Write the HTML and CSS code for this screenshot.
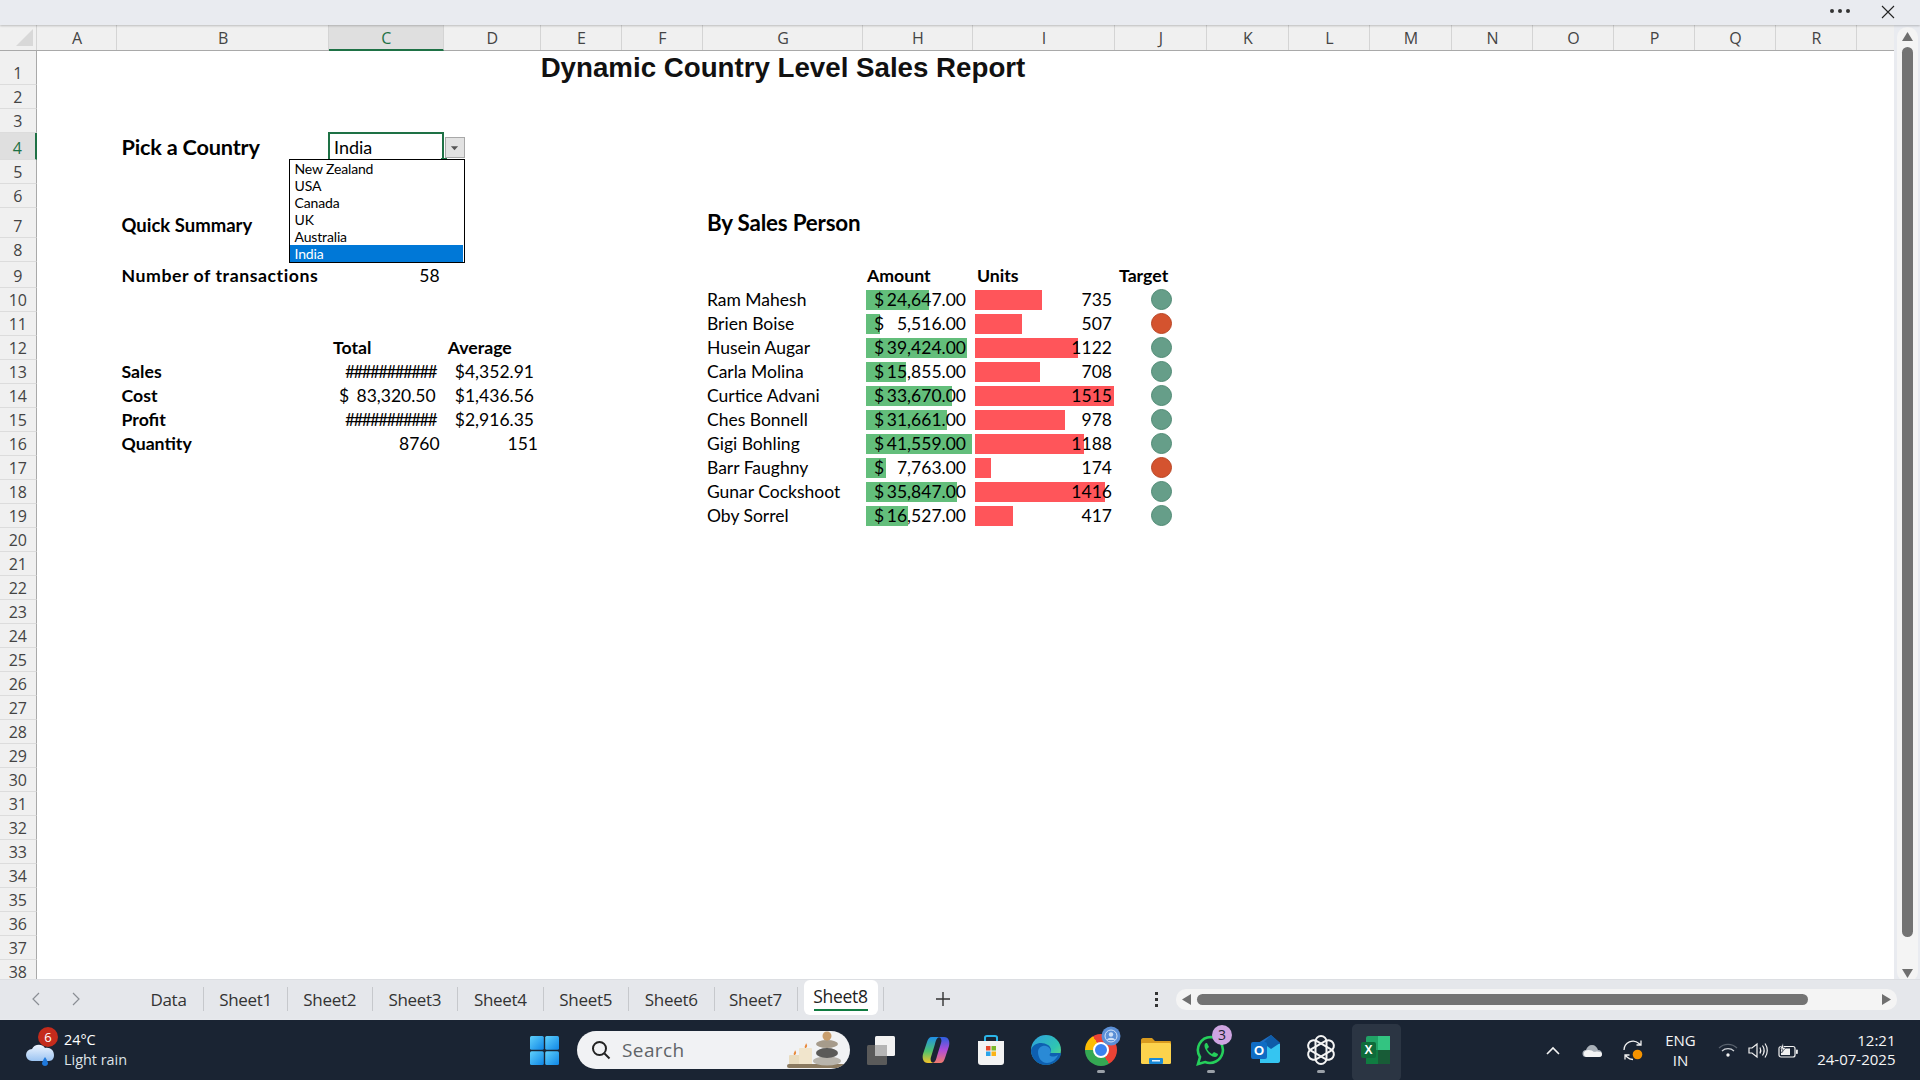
FILE: index.html
```html
<!DOCTYPE html>
<html lang="en">
<head>
<meta charset="utf-8">
<title>Dynamic Country Level Sales Report</title>
<link rel="stylesheet" href="styles.css">
</head>
<body>
<header class="titlebar">
  <div class="dots"><i></i><i></i><i></i></div>
  <svg class="close" viewBox="0 0 14 14"><path d="M1 1L13 13M13 1L1 13"/></svg>
</header>
<main class="main">
  <section class="sheet">
    <div class="row colhead">
      <div class="corner"><svg viewBox="0 0 36 25"><path d="M33 4V21H16Z"/></svg></div>
      <div class="ch-l">A</div><div class="ch-l">B</div><div class="ch-l active">C</div><div class="ch-l">D</div><div class="ch-l">E</div><div class="ch-l">F</div><div class="ch-l">G</div><div class="ch-l">H</div><div class="ch-l">I</div><div class="ch-l">J</div><div class="ch-l">K</div><div class="ch-l">L</div><div class="ch-l">M</div><div class="ch-l">N</div><div class="ch-l">O</div><div class="ch-l">P</div><div class="ch-l">Q</div><div class="ch-l">R</div><div class="ch-l end"></div>
    </div>
    <div class="row r1"><div class="rh">1</div><div class="c cg title-cell"><span class="title">Dynamic Country Level Sales Report</span></div></div>
    <div class="row"><div class="rh">2</div></div>
    <div class="row"><div class="rh">3</div></div>
    <div class="row r4"><div class="rh active">4</div><div class="c cb big">Pick a Country</div><div class="c cc sel">India</div></div>
    <div class="row"><div class="rh">5</div></div>
    <div class="row"><div class="rh">6</div></div>
    <div class="row r7"><div class="rh">7</div><div class="c cb b mid">Quick Summary</div><div class="c cg b sales-title">By Sales Person</div></div>
    <div class="row"><div class="rh">8</div></div>
    <div class="row r9"><div class="rh">9</div><div class="c cb b wide">Number of transactions</div><div class="c cc num">58</div><div class="c ch b">Amount</div><div class="c ci b">Units</div><div class="c cj b">Target</div></div>
    <div class="row"><div class="rh">10</div><div class="c cg">Ram Mahesh</div><div class="c ch acc"><i class="bar green" style="width:63px"></i><span>$</span><span>24,647.00</span></div><div class="c ci num"><i class="bar red" style="width:66.5px"></i><span>735</span></div><div class="c cj"><i class="dot ok"></i></div></div>
    <div class="row"><div class="rh">11</div><div class="c cg">Brien Boise</div><div class="c ch acc"><i class="bar green" style="width:14px"></i><span>$</span><span>5,516.00</span></div><div class="c ci num"><i class="bar red" style="width:46.5px"></i><span>507</span></div><div class="c cj"><i class="dot bad"></i></div></div>
    <div class="row"><div class="rh">12</div><div class="c cb"></div><div class="c cc b">Total</div><div class="c cd b">Average</div><div class="c cg">Husein Augar</div><div class="c ch acc"><i class="bar green" style="width:101px"></i><span>$</span><span>39,424.00</span></div><div class="c ci num"><i class="bar red" style="width:103px"></i><span>1122</span></div><div class="c cj"><i class="dot ok"></i></div></div>
    <div class="row"><div class="rh">13</div><div class="c cb b">Sales</div><div class="c cc hash">###########</div><div class="c cd avg">$4,352.91</div><div class="c cg">Carla Molina</div><div class="c ch acc"><i class="bar green" style="width:40px"></i><span>$</span><span>15,855.00</span></div><div class="c ci num"><i class="bar red" style="width:64.5px"></i><span>708</span></div><div class="c cj"><i class="dot ok"></i></div></div>
    <div class="row"><div class="rh">14</div><div class="c cb b">Cost</div><div class="c cc acc2"><span>$</span><span>83,320.50</span></div><div class="c cd avg">$1,436.56</div><div class="c cg">Curtice Advani</div><div class="c ch acc"><i class="bar green" style="width:86px"></i><span>$</span><span>33,670.00</span></div><div class="c ci num"><i class="bar red" style="width:139px"></i><span>1515</span></div><div class="c cj"><i class="dot ok"></i></div></div>
    <div class="row"><div class="rh">15</div><div class="c cb b">Profit</div><div class="c cc hash">###########</div><div class="c cd avg">$2,916.35</div><div class="c cg">Ches Bonnell</div><div class="c ch acc"><i class="bar green" style="width:81px"></i><span>$</span><span>31,661.00</span></div><div class="c ci num"><i class="bar red" style="width:90px"></i><span>978</span></div><div class="c cj"><i class="dot ok"></i></div></div>
    <div class="row"><div class="rh">16</div><div class="c cb b">Quantity</div><div class="c cc num">8760</div><div class="c cd num">151</div><div class="c cg">Gigi Bohling</div><div class="c ch acc"><i class="bar green" style="width:106px"></i><span>$</span><span>41,559.00</span></div><div class="c ci num"><i class="bar red" style="width:109px"></i><span>1188</span></div><div class="c cj"><i class="dot ok"></i></div></div>
    <div class="row"><div class="rh">17</div><div class="c cg">Barr Faughny</div><div class="c ch acc"><i class="bar green" style="width:20px"></i><span>$</span><span>7,763.00</span></div><div class="c ci num"><i class="bar red" style="width:15.5px"></i><span>174</span></div><div class="c cj"><i class="dot bad"></i></div></div>
    <div class="row"><div class="rh">18</div><div class="c cg">Gunar Cockshoot</div><div class="c ch acc"><i class="bar green" style="width:91px"></i><span>$</span><span>35,847.00</span></div><div class="c ci num"><i class="bar red" style="width:130px"></i><span>1416</span></div><div class="c cj"><i class="dot ok"></i></div></div>
    <div class="row"><div class="rh">19</div><div class="c cg">Oby Sorrel</div><div class="c ch acc"><i class="bar green" style="width:42px"></i><span>$</span><span>16,527.00</span></div><div class="c ci num"><i class="bar red" style="width:38px"></i><span>417</span></div><div class="c cj"><i class="dot ok"></i></div></div>
    <div class="row"><div class="rh">20</div></div><div class="row"><div class="rh">21</div></div><div class="row"><div class="rh">22</div></div><div class="row"><div class="rh">23</div></div><div class="row"><div class="rh">24</div></div><div class="row"><div class="rh">25</div></div><div class="row"><div class="rh">26</div></div><div class="row"><div class="rh">27</div></div><div class="row"><div class="rh">28</div></div><div class="row"><div class="rh">29</div></div><div class="row"><div class="rh">30</div></div><div class="row"><div class="rh">31</div></div><div class="row"><div class="rh">32</div></div><div class="row"><div class="rh">33</div></div><div class="row"><div class="rh">34</div></div><div class="row"><div class="rh">35</div></div><div class="row"><div class="rh">36</div></div><div class="row"><div class="rh">37</div></div><div class="row r38"><div class="rh">38</div></div>

    <div class="dd-handle"></div>
    <div class="dd-btn"><svg viewBox="0 0 10 6"><path d="M1 1H9L5 5.5Z"/></svg></div>
    <ul class="dd-list">
      <li>New Zealand</li><li>USA</li><li>Canada</li><li>UK</li><li>Australia</li><li class="on">India</li>
    </ul>
  </section>
  <aside class="vscroll">
    <div class="vtrack">
      <svg class="varrow" viewBox="0 0 11 9"><path d="M5.500 0L11 9H0Z"/></svg>
      <div class="vthumb"></div>
      <svg class="varrow" viewBox="0 0 11 9"><path d="M0 0H11L5.500 9Z"/></svg>
    </div>
  </aside>
</main>
<nav class="tabbar">
  <svg class="nav-arrow a1" viewBox="0 0 8 14"><path d="M7 1L1 7L7 13"/></svg>
  <svg class="nav-arrow a2" viewBox="0 0 8 14"><path d="M1 1L7 7L1 13"/></svg>
  <div class="tabs">
    <div class="tab t0">Data</div>
    <div class="tab t1">Sheet1</div>
    <div class="tab t2">Sheet2</div>
    <div class="tab t2">Sheet3</div>
    <div class="tab t3">Sheet4</div>
    <div class="tab t2">Sheet5</div>
    <div class="tab t3">Sheet6</div>
    <div class="tab t4">Sheet7</div>
    <div class="tab active">Sheet8</div>
    <div class="tab-end"></div>
  </div>
  <svg class="plus" viewBox="0 0 16 16"><path d="M8 1V15M1 8H15"/></svg>
  <div class="kebab"><i></i><i></i><i></i></div>
  <div class="htrack">
    <svg class="harrow" viewBox="0 0 9 11"><path d="M9 0V11L0 5.500Z"/></svg>
    <div class="hthumb"></div>
    <svg class="harrow" viewBox="0 0 9 11"><path d="M0 0V11L9 5.500Z"/></svg>
  </div>
</nav>
<footer class="taskbar">
  <div class="weather">
    <div class="wicon">
      <svg viewBox="0 0 32 26" width="32" height="26"><defs><linearGradient id="cl" x1="0" y1="0" x2="0" y2="1"><stop offset="0" stop-color="#eef5ff"/><stop offset="1" stop-color="#9cc4f2"/></linearGradient></defs><path d="M7 19a6 6 0 0 1 0-12c2-5 10-6 13-1 5-1 9 2 9 7s-3 6-6 6Z" fill="url(#cl)"/><path d="M20 15c2 3 3 5 3 7a3.200 3.200 0 0 1-6 0c0-2 1-4 3-7Z" fill="#1e78dc"/></svg>
      <span class="wbadge">6</span>
    </div>
    <div class="wtext"><span>24°C</span><span class="wsub">Light rain</span></div>
  </div>
  <div class="center">
    <svg class="winlogo" viewBox="0 0 29 29"><defs><linearGradient id="wl" x1="0" y1="0" x2="1" y2="1"><stop offset="0" stop-color="#5fd0fb"/><stop offset="1" stop-color="#0f86e6"/></linearGradient></defs><rect x="0" y="0" width="13.800" height="13.800" rx="1.500" fill="url(#wl)"/><rect x="15.200" y="0" width="13.800" height="13.800" rx="1.500" fill="url(#wl)"/><rect x="0" y="15.200" width="13.800" height="13.800" rx="1.500" fill="url(#wl)"/><rect x="15.200" y="15.200" width="13.800" height="13.800" rx="1.500" fill="url(#wl)"/></svg>
    <div class="search">
      <svg class="sicon" viewBox="0 0 20 20"><circle cx="8.500" cy="8.500" r="6.500"/><path d="M13.500 13.500L18.500 18.500"/></svg>
      <span class="stext">Search</span>
      <svg class="stones" viewBox="0 0 60 38"><rect x="2" y="24" width="12" height="10" rx="1" fill="#e9dcc0"/><rect x="12" y="17" width="13" height="17" rx="1" fill="#f1e5cc"/><path d="M7 24c-1-2 1-3 1-5 1 2 2 3 0 5ZM18 17c-1-2 1-3 1-5 1 2 2 3 0 5Z" fill="#e98a3c"/><rect x="0" y="33" width="58" height="4" rx="2" fill="#8b7a60"/><ellipse cx="40" cy="30" rx="14" ry="4.500" fill="#b8b4ac"/><ellipse cx="40" cy="22" rx="11" ry="5" fill="#5b5a58"/><ellipse cx="40" cy="13" rx="11" ry="4" fill="#a69b8b"/><circle cx="40" cy="5" r="4.500" fill="#c89d6c"/></svg>
    </div>
    <div class="apps">
      <div class="app"><svg viewBox="0 0 32 32"><rect x="10" y="2" width="20" height="20" rx="1.500" fill="#f2f2f2"/><rect x="2" y="11" width="20" height="20" rx="1.500" fill="#5a5a5a"/><rect x="10" y="11" width="12" height="11" fill="#b5b5b5"/></svg></div>
      <div class="app"><svg viewBox="0 0 32 32"><defs><linearGradient id="cp1" x1="0" y1="0" x2="0" y2="1"><stop offset="0" stop-color="#1f8fe8"/><stop offset=".55" stop-color="#4fc36d"/><stop offset="1" stop-color="#f6c329"/></linearGradient><linearGradient id="cp2" x1="0" y1="0" x2="0" y2="1"><stop offset="0" stop-color="#2b5fe0"/><stop offset=".5" stop-color="#b04cd8"/><stop offset="1" stop-color="#f07a6c"/></linearGradient></defs><path d="M20 29C23 29 24 27 25 24L29 12C30 8 29 3 24 3H18C21 3 22 6 21 9L17 22C16 26 15 29 12 29Z" fill="url(#cp2)"/><path d="M12 3C9 3 8 5 7 8L3 20C2 24 3 29 8 29H14C11 29 10 26 11 23L15 10C16 6 17 3 20 3Z" fill="url(#cp1)"/></svg></div>
      <div class="app"><svg viewBox="0 0 32 32"><path d="M10 7V3.500C10 2.500 11 2 12 2h8c1 0 2 .5 2 1.500V7" fill="none" stroke="#2bb5e8" stroke-width="2"/><path d="M3 7h26v21c0 2-1 3-3 3H6c-2 0-3-1-3-3Z" fill="#f3f3f3"/><rect x="11" y="12" width="4.500" height="4.500" fill="#e6492d"/><rect x="16.500" y="12" width="4.500" height="4.500" fill="#7bb82a"/><rect x="11" y="17.500" width="4.500" height="4.500" fill="#2aa4ea"/><rect x="16.500" y="17.500" width="4.500" height="4.500" fill="#fbb416"/></svg></div>
      <div class="app"><svg viewBox="0 0 32 32"><defs><linearGradient id="ed" x1="0" y1="0" x2="1" y2="1"><stop offset="0" stop-color="#2e9ee0"/><stop offset=".6" stop-color="#2fc4b2"/><stop offset="1" stop-color="#7fe06a"/></linearGradient></defs><circle cx="16" cy="16" r="15" fill="url(#ed)"/><path d="M1 16C3 9 12 7 18 11c3 2 4 6 2 8h11c0 6-7 12-15 12C7 31 1 24 1 16Z" fill="#0e5fb0"/><path d="M8 18c0-4 4-7 8-6 4 1 6 5 4 8-2 2 3 4 8 1-2 5-7 8-11 8-6 0-9-6-9-11Z" fill="#2a8ad6"/></svg></div>
      <div class="app"><div class="chrome"><i></i></div><span class="chrome-badge"><svg viewBox="0 0 20 20" width="20" height="20"><circle cx="10" cy="10" r="9.500" fill="#5b8fd6"/><circle cx="10" cy="10" r="6" fill="none" stroke="#cfe0f7" stroke-width="1"/><circle cx="10" cy="8.500" r="2.200" fill="#cfe0f7"/><path d="M6 14c1-3 7-3 8 0Z" fill="#cfe0f7"/></svg></span></div>
      <div class="app"><svg viewBox="0 0 32 32"><path d="M1 6c0-1 1-2 2-2h9l3 3h15c1 0 1 1 1 1v4H1Z" fill="#d99b1f"/><rect x="1" y="9" width="30" height="21" rx="1.500" fill="#fcd34d"/><rect x="9" y="24" width="14" height="6" rx="1" fill="#1a8ad8"/><rect x="12" y="26" width="8" height="1.500" fill="#e8f4ff"/></svg></div>
      <div class="app"><svg viewBox="0 0 32 32"><path d="M16 3a13 13 0 0 0-11 20L3 30l7-2a13 13 0 1 0 6-25Z" fill="none" stroke="#25cf5b" stroke-width="2.600"/><path d="M11 9c-2 1-2 4 0 7 2 4 6 7 9 7 2 0 3-2 3-3l-4-2-2 2c-2-1-4-3-5-5l2-2-2-4Z" fill="#25cf5b"/></svg><span class="appbadge">3</span></div>
      <div class="app"><svg viewBox="0 0 32 32"><path d="M8 9l13-8 9 8v15H8Z" fill="#1f6fc4"/><path d="M10 10h20v17c0 1-1 2-2 2H10Z" fill="#35c5f1"/><path d="M21 1l9 8-9 6-8-6Z" fill="#0f5ca8"/><rect x="1" y="8" width="16" height="17" rx="2" fill="#0f6cc4"/></svg><span class="outlook-o">O</span></div>
      <div class="app"><svg viewBox="0 0 32 32" fill="none" stroke="#f4f4f4" stroke-width="2"><rect x="10.500" y="2" width="11" height="28" rx="5.500"/><rect x="10.500" y="2" width="11" height="28" rx="5.500" transform="rotate(60 16 16)"/><rect x="10.500" y="2" width="11" height="28" rx="5.500" transform="rotate(120 16 16)"/></svg></div>
      <div class="app excel"><svg viewBox="0 0 32 32"><rect x="6" y="2" width="24" height="28" rx="2" fill="#21a366"/><rect x="18" y="2" width="12" height="14" fill="#33c481"/><rect x="6" y="16" width="24" height="14" fill="#107c41"/><rect x="18" y="16" width="12" height="14" fill="#185c37"/><rect x="1" y="8" width="15" height="16" rx="2" fill="#0f6b3a"/></svg><span class="excel-x">X</span></div>
    </div>
  </div>
  <div class="tray">
    <svg class="t-chev" viewBox="0 0 14 9"><path d="M1 8L7 2L13 8"/></svg>
    <svg class="t-cloud" viewBox="0 0 20 13"><path d="M4 13a3.500 3.500 0 0 1 0-7c1-3 3-5 6-5s5 2 6 5c3 0 4 2 4 4s-1 3-3 3Z" fill="#a9b0b8"/><path d="M4 13a3.500 3.500 0 0 1-1-6c3-2 7-1 9 1 2-1 8-1 8 2 0 2-1 3-3 3Z" fill="#f4f4f4"/></svg>
    <span class="t-sync"><svg viewBox="0 0 22 22" width="22" height="22"><path d="M2 11a9 9 0 0 1 15-6.500L19 6M19 1.500V6H14.500M3 16l2 2a9 9 0 0 0 6 2.500M3 20.500V16H7.500" fill="none" stroke="#f2f2f2" stroke-width="1.300"/><circle cx="15.500" cy="15.500" r="4.800" fill="#f59300"/></svg></span>
    <div class="t-lang"><span>ENG</span><span>IN</span></div>
    <svg class="t-wifi" viewBox="0 0 20 14"><path d="M1 5a13 13 0 0 1 18 0" fill="none" stroke="#59626e" stroke-width="1.300"/><path d="M4 8a9 9 0 0 1 12 0" fill="none" stroke="#cfd3d8" stroke-width="1.300"/><circle cx="10" cy="12" r="1.700" fill="#f4f4f4"/></svg>
    <svg class="t-vol" viewBox="0 0 20 17" fill="none" stroke="#f2f2f2" stroke-width="1.200"><path d="M1 6v5h3l5 4V2L4 6Z"/><path d="M12 5.500c1 2 1 4 0 6M14.500 3.500c2 3 2 7 0 10M17 1.500c3 4 3 10 0 14"/></svg>
    <svg class="t-bat" viewBox="0 0 20 15"><rect x="1" y="3.500" width="16" height="10.500" rx="2" fill="none" stroke="#f2f2f2" stroke-width="1.200"/><rect x="3" y="5.500" width="9" height="6.500" fill="#f2f2f2"/><rect x="18" y="6.500" width="1.800" height="4.500" rx=".8" fill="#f2f2f2"/><path d="M5 0L2 6H5L3.500 10L8 4.500H5.500Z" fill="#f2f2f2" stroke="#1a2433" stroke-width=".6"/></svg>
    <div class="t-clock"><span>12:21</span><span>24-07-2025</span></div>
  </div>
</footer>
</body>
</html>
```
FILE: styles.css
```css
* { box-sizing: border-box; }
html, body { margin: 0; padding: 0; }
body {
  width: 1920px;
  height: 1080px;
  overflow: hidden;
  display: flex;
  flex-direction: column;
  background: #e7e9ed;
  font-family: "Lato", "Liberation Sans", sans-serif;
  color: #000;
}

/* top strip */
.titlebar {
  height: 25px;
  flex: none;
  background: #e9ebf0;
  box-shadow: 0 1px 2px rgba(0,0,0,.22);
  display: flex;
  justify-content: flex-end;
  align-items: center;
  gap: 31px;
  padding-right: 25px;
  position: relative;
  z-index: 2;
}
.dots { display: flex; gap: 4px; margin-top: -3px; }
.dots i { width: 4px; height: 4px; border-radius: 50%; background: #333; }
.close { width: 14px; height: 14px; margin-top: -1px; }
.close path { stroke: #222; stroke-width: 1.1; fill: none; }

/* sheet */
.main { height: 954px; flex: none; display: flex; }
.sheet {
  width: 1894px;
  height: 954px;
  background: #fff;
  position: relative;
  --cols: 36.7px 80.8px 211.5px 114.7px 97.3px 81px 81px 160px 110px 142px 92px 82px 81px 82px 81px 81px 81px 81px 81px 37px;
}
.row {
  display: grid;
  grid-template-columns: var(--cols);
  grid-template-rows: 100%;
  height: 24px;
  font-size: 17.500px;
  line-height: 23px;
}
.colhead {
  height: 25.7px;
  background: #f0f0f0;
  border-bottom: 1px solid #a9a9a9;
  font-family: "Open Sans", sans-serif;
  font-size: 16px;
  color: #444;
}
.corner { border-right: 1px solid #d4d4d4; }
.corner svg { display: block; width: 36px; height: 25px; }
.corner path { fill: #d8d8d8; }
.ch-l { text-align: center; border-right: 1px solid #d4d4d4; line-height: 26px; padding-left: 1px; }
.ch-l.end { border-right: 0; }
.ch-l.active {
  background: #dfdfdf;
  color: #1e7145;
  border-bottom: 2px solid #1e7145;
  height: 25.700px;
}
.r1 { height: 34.8px; }
.r4 { height: 26.8px; }
.r7 { height: 30px; }
.r9 { height: 26px; }
.r38 { height: 18.500px; }

.rh {
  grid-column: 1;
  background: #f0f0f0;
  border-right: 1px solid #a9a9a9;
  border-bottom: 1px solid #dcdcdc;
  font-family: "Open Sans", sans-serif;
  font-size: 16px;
  line-height: 21px;
  color: #444;
  text-align: center;
  display: flex;
  align-items: flex-end;
  justify-content: center;
}
.r38 .rh { line-height: 13px; align-items: flex-start; padding-top: 6px; border-bottom: 0; }
.rh.active {
  background: #dfdfdf;
  color: #1e7145;
  border-right: 2px solid #1e7145;
}

.c {
  padding: 0 4px;
  white-space: nowrap;
  align-self: end;
  height: 24px;
  position: relative;
}
.cb { grid-column: 3; }
.cc { grid-column: 4; }
.cd { grid-column: 5; }
.cg { grid-column: 8; }
.ch { grid-column: 9; }
.ci { grid-column: 10; }
.cj { grid-column: 11; }
.b { font-weight: 700; font-size: 17.700px; }
.wide { letter-spacing: .55px; }
.big { font-size: 21.700px; font-weight: 700; letter-spacing: -.2px; line-height: 22px; }
.mid { font-size: 18.500px; }
.sales-title { font-size: 22.400px; margin-bottom: 3px; letter-spacing: -.2px; }
.num { text-align: right; }
.ci.num, .cd.num { padding-right: 3px; }
.title-cell { align-self: center; display: flex; justify-content: center; }
.title {
  font-family: "Liberation Sans", Arial, sans-serif;
  font-weight: 700;
  font-size: 27.700px;
  line-height: 24px;
  color: #111;
}
.sel {
  height: 28px;
  margin-left: -1px;
  border: 2px solid #1e7145;
  border-bottom-width: 0;
  font-size: 18px;
  line-height: 26px;
  padding-left: 4px;
}
.acc, .acc2 { display: flex; justify-content: space-between; }
.acc { padding: 0 7px 0 11px; }
.acc2 { padding: 0 8px 0 10px; }
.hash { text-align: right; padding-right: 8px; letter-spacing: -1.900px; }
.avg { text-align: right; padding-right: 7px; }
.acc span, .num span { position: relative; }
.bar {
  position: absolute;
  left: 2.500px;
  top: 2px;
  height: 20px;
}
.green { background: #63be7b; left: 3px; }
.red { background: #ff555a; }
.dot {
  display: block;
  width: 21px;
  height: 21px;
  border-radius: 50%;
  margin: 1px 0 0 32.500px;
}
.dot.ok { background: #669e89; border: 1px solid #4f8a74; }
.dot.bad { background: #d4532f; border: 1px solid #b94524; }

/* dropdown */
.dd-handle {
  position: absolute;
  left: 441px;
  top: 133px;
  width: 6px;
  height: 5px;
  background: #1e7145;
}
.dd-btn {
  position: absolute;
  left: 444.500px;
  top: 112px;
  width: 20px;
  height: 21px;
  background: #e2e2e2;
  border: 1px solid #a8a8a8;
  display: flex;
  align-items: center;
  justify-content: center;
}
.dd-btn svg { width: 9px; height: 6px; }
.dd-btn path { fill: #555; }
.dd-list {
  position: absolute;
  left: 289px;
  top: 134.300px;
  width: 175.500px;
  height: 103.400px;
  margin: 0;
  padding: 0 1px 0 0;
  list-style: none;
  background: #fff;
  border: 1px solid #000;
  font-size: 14px;
  line-height: 17px;
}
.dd-list li { padding-left: 4.500px; height: 17px; letter-spacing: -.15px; }
.dd-list li.on { background: #0078d7; color: #fff; }

/* vertical scroll */
.vscroll { width: 26px; background: #e9ebf0; padding-top: 2px; position: relative; }
.vtrack {
  width: 21px;
  height: 955px;
  margin-left: 3px;
  background: #f4f4f4;
  border-radius: 10px;
  display: flex;
  flex-direction: column;
  align-items: center;
  gap: 6px;
  padding: 5px 0 6px;
}
.varrow { width: 11px; height: 9px; flex: none; }
.varrow path { fill: #6f6f6f; }
.vthumb { flex: none; width: 11px; height: 890px; background: #737373; border-radius: 6px; margin-bottom: 26px; }

/* sheet tabs */
.tabbar {
  height: 40px;
  flex: none;
  display: flex;
  align-items: center;
  background: #e5e7eb;
  position: relative;
  padding-left: 32px;
  padding-bottom: 1px;
  border-top: 1px solid #dcdee2;
}
.nav-arrow { width: 8px; height: 14px; flex: none; fill: none; stroke: #8a8e94; stroke-width: 1.200; }
.a2 { margin-left: 32px; }
.tabs {
  display: flex;
  height: 100%;
  margin-left: 54.400px;
  font-family: "Open Sans", sans-serif;
  font-size: 17px;
  color: #333;
  letter-spacing: -.3px;
}
.tab {
  display: flex;
  align-items: center;
  justify-content: center;
  height: 24px;
  margin-top: 7px;
  border-right: 1px solid #c6c8cc;
}
.t0 { width: 69.200px; }
.t1 { width: 84px; padding-left: 1px; }
.t2 { width: 85.200px; }
.t3 { width: 85.700px; }
.t4 { width: 83px; }
.tab.active {
  width: 74px;
  height: 35px;
  margin-top: 0;
  margin-left: 6px;
  background: #fff;
  border: 0;
  border-radius: 6px;
  font-weight: 500;
  font-size: 17.500px;
  color: #222;
  padding-bottom: 4px;
  position: relative;
}
.tab.active::after {
  content: "";
  position: absolute;
  left: 10px;
  right: 10px;
  bottom: 4px;
  height: 2px;
  background: #107c41;
}
.tab-end { width: 1px; height: 24px; margin: 7px 0 0 5.500px; background: #c6c8cc; }
.plus { width: 16px; height: 16px; margin-left: 50.500px; flex: none; fill: none; stroke: #333; stroke-width: 1.400; }
.kebab { display: flex; flex-direction: column; gap: 3px; margin-left: 204px; }
.kebab i { display: block; width: 3px; height: 3px; background: #333; }
.htrack {
  width: 721px;
  height: 21px;
  margin-left: 18px;
  background: #f4f4f4;
  border-radius: 10px;
  display: flex;
  align-items: center;
  padding: 0 6px;
}
.harrow { width: 9px; height: 11px; flex: none; fill: #6f6f6f; }
.hthumb { width: 611px; height: 11px; background: #737373; border-radius: 6px; margin: 0 74px 0 6px; flex: none; }

/* taskbar */
.taskbar {
  height: 60px;
  flex: none;
  margin-top: 1px;
  background: #1a2433;
  color: #f5f5f5;
  display: flex;
  align-items: center;
  font-family: "Open Sans", sans-serif;
}
.weather { width: 530px; display: flex; padding-left: 25px; align-items: center; flex: none; }
.wicon { width: 39px; height: 34px; position: relative; padding-top: 9px; }
.wbadge {
  position: absolute;
  left: 13px;
  top: -6px;
  width: 20px;
  height: 20px;
  border-radius: 50%;
  background: #c42b1c;
  color: #fff;
  font-size: 13px;
  line-height: 20px;
  text-align: center;
}
.wtext { display: flex; flex-direction: column; font-size: 14.400px; line-height: 20px; color: #fff; }
.wsub { color: #dfe3e8; }
.center { display: flex; align-items: center; flex: none; }
.winlogo { width: 29px; height: 29px; flex: none; }
.search {
  width: 273px;
  height: 38px;
  margin-left: 18px;
  background: #f1f2f4;
  border-radius: 19px;
  display: flex;
  align-items: center;
  padding-left: 14px;
  flex: none;
  overflow: hidden;
}
.sicon { width: 20px; height: 20px; flex: none; fill: none; stroke: #222; stroke-width: 2; }
.stext { color: #606468; font-size: 19px; margin-left: 11px; flex: none; letter-spacing: .4px; }
.stones { width: 60px; height: 38px; margin-left: auto; flex: none; margin-right: 3px; }
.apps { display: flex; gap: 23px; margin-left: 15px; }
.app { width: 32px; height: 32px; position: relative; flex: none; }
.app > svg { display: block; width: 32px; height: 32px; }
.app:nth-child(5)::after, .app:nth-child(7)::after, .app:nth-child(9)::after {
  content: "";
  position: absolute;
  left: 12px;
  bottom: -7px;
  width: 8px;
  height: 3px;
  border-radius: 2px;
  background: #9aa0a8;
}
.excel::before {
  content: "";
  position: absolute;
  inset: -10px -9px -15px -8px;
  background: rgba(255,255,255,.08);
  border-radius: 5px;
}
.excel::after {
  left: 6px !important;
  width: 20px !important;
  background: #d8a9e6 !important;
  bottom: -12px !important;
}
.excel > svg { position: relative; }
.excel-x {
  position: absolute;
  left: 1px;
  top: 8px;
  width: 15px;
  height: 16px;
  font: 700 12px/16px "Liberation Sans", sans-serif;
  text-align: center;
  color: #fff;
}
.chrome {
  width: 32px;
  height: 32px;
  border-radius: 50%;
  background: conic-gradient(from 30deg, #ea4335 0 120deg, #34a853 120deg 240deg, #fbbc04 240deg 300deg, #ea4335 300deg);
  display: flex;
  align-items: center;
  justify-content: center;
}
.chrome i { width: 16px; height: 16px; border-radius: 50%; background: #3b82f0; border: 2px solid #fff; }
.chrome-badge { position: absolute; left: 16px; top: -8px; width: 20px; height: 20px; }
.appbadge {
  position: absolute;
  left: 17px;
  top: -9px;
  width: 20px;
  height: 20px;
  border-radius: 50%;
  background: #cfa5e2;
  color: #1a2433;
  font-size: 14px;
  line-height: 20px;
  text-align: center;
}
.outlook-o {
  position: absolute;
  left: 1px;
  top: 8px;
  width: 16px;
  height: 17px;
  font: 700 13px/17px "Liberation Sans", sans-serif;
  color: #fff;
  text-align: center;
}
.tray { display: flex; align-items: center; flex: none; margin-left: 154px; }
.t-chev { width: 14px; height: 9px; fill: none; stroke: #f4f4f4; stroke-width: 1.600; flex: none; }
.t-cloud { width: 20px; height: 13px; margin-left: 21.500px; flex: none; }
.t-sync { width: 22px; height: 22px; margin-left: 20px; flex: none; }
.t-lang { width: 40px; margin-left: 17px; display: flex; flex-direction: column; align-items: center; font-size: 15px; line-height: 20px; }
.t-wifi { width: 20px; height: 14px; margin-left: 17px; flex: none; }
.t-vol { width: 20px; height: 17px; margin-left: 10px; flex: none; }
.t-bat { width: 20px; height: 15px; margin-left: 10px; flex: none; }
.t-clock { display: flex; flex-direction: column; align-items: flex-end; width: 98px; font-size: 15px; line-height: 19px; }
```
